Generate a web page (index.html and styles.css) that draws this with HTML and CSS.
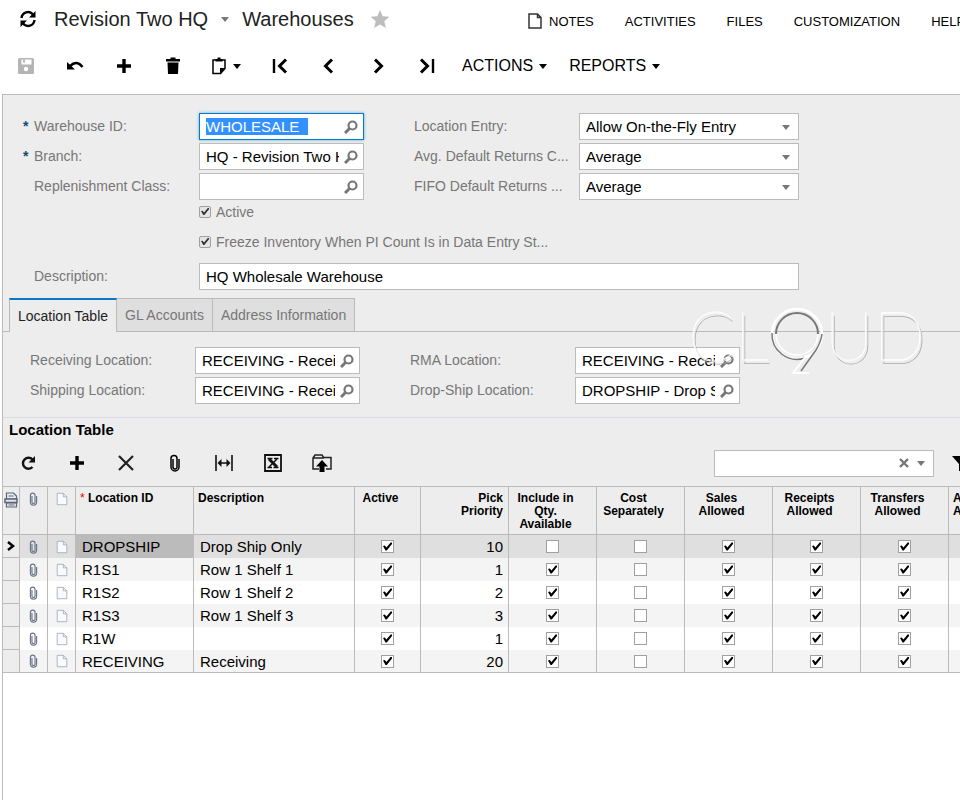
FILE: index.html
```html
<!DOCTYPE html>
<html lang="en">
<head>
    <meta charset="UTF-8">
    <meta name="viewport" content="width=device-width, initial-scale=1.0">
    <title>Warehouses</title>
    <link rel="stylesheet" href="styles.css">
</head>
<body>
    <svg class="defs" aria-hidden="true">
        <symbol id="i-lens" viewBox="0 0 14 14"><circle cx="8.5" cy="5.5" r="4" fill="none" stroke="currentColor" stroke-width="2.2"/><path d="M6 8L1 13" stroke="currentColor" stroke-width="3"/></symbol>
        <symbol id="i-plus" viewBox="0 0 16 16"><path d="M8 1v14M1 8h14" stroke="currentColor" stroke-width="3.4"/></symbol>
        <symbol id="i-clip" viewBox="0 0 12 18"><path d="M4 5v8a2 2 0 0 0 4 0V4.500a3 3 0 0 0-6 0M2 4.500V13a4 4 0 0 0 8 0V5" fill="none" stroke="currentColor" stroke-width="1.500"/></symbol>
        <symbol id="i-page" viewBox="0 0 14 16"><path d="M1.500 1.500h7l4 4v9h-11z" fill="#f8fafd" stroke="currentColor"/><path d="M8.500 1.500v4h4" fill="none" stroke="currentColor"/></symbol>
        <symbol id="i-left" viewBox="0 0 18 18"><path d="M12 2.500L5.500 9L12 15.500" fill="none" stroke="currentColor" stroke-width="3"/></symbol>
    </svg>

    <header class="title-bar">
        <div class="title">
            <button class="icon-btn" aria-label="Refresh">
                <svg width="18" height="18" viewBox="0 0 18 18"><path d="M2.500 8a6.500 6.500 0 0 1 11.500-3.500M15.500 10a6.500 6.500 0 0 1-11.500 3.500" fill="none" stroke="#000" stroke-width="2.400"/><path d="M16.500 1v6.500H10zM1.500 17v-6.500H8z"/></svg>
            </button>
            <h1>Revision Two HQ <span class="caret caret-gray"></span> Warehouses</h1>
            <svg width="20" height="20" viewBox="0 0 20 20"><path d="M10 1l2.700 6.200 6.600.6-5 4.500 1.500 6.600L10 15.500l-5.800 3.400 1.500-6.600-5-4.500 6.600-.6z" fill="#bdbdbd"/></svg>
        </div>
        <nav class="menu">
            <a href="#"><svg width="14" height="16" viewBox="0 0 14 16"><path d="M1 1h8.500L13 4.500V15H1zM9.500 1v3.500H13" fill="none" stroke="#333" stroke-width="1.500"/></svg>NOTES</a>
            <a href="#">ACTIVITIES</a>
            <a href="#">FILES</a>
            <a href="#">CUSTOMIZATION</a>
            <a href="#">HELP</a>
        </nav>
    </header>

    <div class="toolbar main-toolbar">
        <button aria-label="Save" disabled><svg width="16" height="16" viewBox="0 0 16 16"><path d="M0 1.500Q0 0 1.500 0h13Q16 0 16 1.500v13q0 1.500-1.500 1.500h-13Q0 16 0 14.500z" fill="#b5b5b5"/><path d="M3.500 1.500h10v5h-10z" fill="#fff"/><path d="M5 1.500h2v3H5z" fill="#b5b5b5"/><circle cx="8" cy="11" r="2.200" fill="#fff"/></svg></button>
        <button aria-label="Undo"><svg width="18" height="16" viewBox="0 0 18 16"><path d="M4 8Q11 1.500 16.500 9" fill="none" stroke="#000" stroke-width="2.600"/><path d="M1 4v7.500h8z"/></svg></button>
        <button aria-label="Add"><svg width="16" height="16"><use href="#i-plus"/></svg></button>
        <button aria-label="Delete"><svg width="14" height="18" viewBox="0 0 14 18"><path d="M0 2h4.500V.5h5V2H14v2.500H0zM1.500 5.500h11L12 17H2z"/></svg></button>
        <button class="wide" aria-label="Clipboard"><svg width="14" height="18" viewBox="0 0 14 18"><path d="M1 3h12v8.500L8.500 16.500H1z" fill="#fff" stroke="#000" stroke-width="1.500"/><path d="M3.500 4.500V2h2V.5h3V2h2v2.500zM8 16.500V11h5z"/></svg><span class="caret"></span></button>
        <button aria-label="First"><svg width="18" height="18"><path d="M3 2v14" stroke="#000" stroke-width="2.400"/><use href="#i-left" x="3"/></svg></button>
        <button aria-label="Previous"><svg width="18" height="18"><use href="#i-left"/></svg></button>
        <button aria-label="Next"><svg class="flip" width="18" height="18"><use href="#i-left"/></svg></button>
        <button aria-label="Last"><svg class="flip" width="18" height="18"><path d="M3 2v14" stroke="#000" stroke-width="2.400"/><use href="#i-left" x="3"/></svg></button>
        <button class="text-btn">ACTIONS<span class="caret"></span></button>
        <button class="text-btn">REPORTS<span class="caret"></span></button>
    </div>

    <main class="screen">
        <form class="summary">
            <label class="required" for="warehouse">Warehouse ID:</label>
            <div class="lookup focused"><input id="warehouse" type="text" value="WHOLESALE  "><button type="button" aria-label="Find warehouse"><svg width="14" height="14"><use href="#i-lens"/></svg></button></div>
            <label class="second" for="entry">Location Entry:</label>
            <div class="drop"><select id="entry"><option>Allow On-the-Fly Entry</option></select></div>

            <label class="required" for="branch">Branch:</label>
            <div class="lookup"><input id="branch" type="text" value="HQ - Revision Two HQ"><button type="button" aria-label="Find branch"><svg width="14" height="14"><use href="#i-lens"/></svg></button></div>
            <label class="second" for="avg">Avg. Default Returns C...</label>
            <div class="drop"><select id="avg"><option>Average</option></select></div>

            <label for="replenishment">Replenishment Class:</label>
            <div class="lookup"><input id="replenishment" type="text"><button type="button" aria-label="Find class"><svg width="14" height="14"><use href="#i-lens"/></svg></button></div>
            <label class="second" for="fifo">FIFO Default Returns ...</label>
            <div class="drop"><select id="fifo"><option>Average</option></select></div>

            <label class="check"><input type="checkbox" checked>Active</label>
            <label class="check"><input type="checkbox" checked>Freeze Inventory When PI Count Is in Data Entry St...</label>

            <label for="description">Description:</label>
            <input class="description" id="description" type="text" value="HQ Wholesale Warehouse">
        </form>

        <div class="tabs">
            <button class="tab active">Location Table</button>
            <button class="tab">GL Accounts</button>
            <button class="tab">Address Information</button>
        </div>

        <section class="tab-page">
            <form class="locations">
                <label for="receiving">Receiving Location:</label>
                <div class="lookup"><input id="receiving" type="text" value="RECEIVING - Receiving"><button type="button" aria-label="Find location"><svg width="14" height="14"><use href="#i-lens"/></svg></button></div>
                <label class="second" for="rma">RMA Location:</label>
                <div class="lookup"><input id="rma" type="text" value="RECEIVING - Receiving"><button type="button" aria-label="Find location"><svg width="14" height="14"><use href="#i-lens"/></svg></button></div>
                <label for="shipping">Shipping Location:</label>
                <div class="lookup"><input id="shipping" type="text" value="RECEIVING - Receiving"><button type="button" aria-label="Find location"><svg width="14" height="14"><use href="#i-lens"/></svg></button></div>
                <label class="second" for="dropship">Drop-Ship Location:</label>
                <div class="lookup"><input id="dropship" type="text" value="DROPSHIP - Drop Ship Only"><button type="button" aria-label="Find location"><svg width="14" height="14"><use href="#i-lens"/></svg></button></div>
            </form>

            <div class="cloud-logo">
                <span>C</span>
                <span>L</span>
                <svg width="56" height="72" viewBox="0 0 56 72" fill="none">
                    <circle cx="28" cy="28" r="25" stroke="#fff" stroke-width="2.500"/>
                    <path d="M3 27a25 25 0 0 0 33 25" stroke="#777" stroke-width="1.500"/>
                    <circle cx="28" cy="28" r="21" stroke="#fff" stroke-width="1.500"/>
                    <path d="M7 28a21 21 0 0 1 42 0" stroke="#777" stroke-width="2"/>
                    <path d="M38 49L24 67h16" stroke="#fff" stroke-width="2"/>
                    <path d="M53 28q-1 8-6 16L32 65" stroke="#777" stroke-width="1.500"/>
                </svg>
                <span>U</span>
                <span>D</span>
            </div>
        </section>

        <section class="grid-head">
            <h2>Location Table</h2>
            <div class="toolbar grid-toolbar">
                <button aria-label="Refresh"><svg width="16" height="16" viewBox="0 0 16 16"><path d="M12.500 4.500A5.500 5.500 0 1 0 12.500 12" fill="none" stroke="#111" stroke-width="2.400"/><path d="M15 1v6.500H8.500z" fill="#111"/></svg></button>
                <button aria-label="Add row"><svg width="16" height="16"><use href="#i-plus"/></svg></button>
                <button aria-label="Delete row"><svg width="16" height="16" viewBox="0 0 16 16"><path d="M1 1l14 14M15 1L1 15" stroke="#222" stroke-width="2.200"/></svg></button>
                <button aria-label="Attach file"><svg width="12" height="18"><use href="#i-clip"/></svg></button>
                <button aria-label="Fit width"><svg width="18" height="16" viewBox="0 0 18 16"><path d="M1 0v16M17 0v16M4 8h10" stroke="#111" stroke-width="1.600"/><path d="M2.500 8l4-4v8zM15.500 8l-4-4v8z" fill="#111"/></svg></button>
                <button aria-label="Export to Excel"><svg width="18" height="18" viewBox="0 0 18 18"><path d="M1 1h16v16H1z" fill="none" stroke="#111" stroke-width="1.800"/><path d="M5 5l8 8" stroke="#111" stroke-width="3"/><path d="M13 5l-8 8M3.500 4.500h5M9.500 13.500h5M10 4.500h4.500M3.500 13.500H8" stroke="#111" stroke-width="1.500"/></svg></button>
                <button aria-label="Upload"><svg width="20" height="18" viewBox="0 0 20 18"><path d="M7 15H1V4l2-3h7l1.500 2.500H19V15h-5M1.500 4H12" fill="none" stroke="#222" stroke-width="1.500"/><path d="M10 6l6 6.500h-3.500V18h-5v-5.500H4z"/></svg></button>
                <div class="search">
                    <input type="text" aria-label="Search">
                    <svg width="10" height="10" viewBox="0 0 10 10"><path d="M1 1l8 8M9 1L1 9" stroke="#777" stroke-width="2.400"/></svg>
                    <span class="caret caret-gray"></span>
                </div>
                <button class="filter" aria-label="Filter"><svg width="18" height="16" viewBox="0 0 18 16"><path d="M0 1h18l-7 8v7H7V9z"/></svg></button>
            </div>
        </section>

        <div class="grid">
            <table>
                <colgroup>
                    <col class="c-row"><col class="c-icon"><col class="c-icon"><col class="c-id"><col class="c-desc"><col class="c-active">
                    <col class="c-flag"><col class="c-flag"><col class="c-flag"><col class="c-flag"><col class="c-flag"><col class="c-flag"><col class="c-flag">
                </colgroup>
                <thead>
                    <tr>
                        <th class="icon-cell"><svg width="14" height="16" viewBox="0 0 14 16"><path d="M2.500 1h7l3 3v3h-10zM2.500 11h10v4h-10z" fill="#e8ecf2" stroke="#5c6678" stroke-width="1.200"/><path d="M4.500 4h5M4.500 13h6" stroke="#5c6678" stroke-width="1.200"/><path d="M1 7h12v3.500H1z" fill="#dfe4ec" stroke="#5c6678" stroke-width="1.500"/></svg></th>
                        <th class="icon-cell clip"><svg width="11" height="14"><use href="#i-clip"/></svg></th>
                        <th class="icon-cell page"><svg width="14" height="14"><use href="#i-page"/></svg></th>
                        <th><span class="star">*</span> Location ID</th>
                        <th>Description</th>
                        <th class="mid">Active</th>
                        <th class="num">Pick<br>Priority</th>
                        <th class="mid">Include in<br>Qty.<br>Available</th>
                        <th class="mid">Cost<br>Separately</th>
                        <th class="mid">Sales<br>Allowed</th>
                        <th class="mid">Receipts<br>Allowed</th>
                        <th class="mid">Transfers<br>Allowed</th>
                        <th>Assembly<br>Allowed</th>
                    </tr>
                </thead>
                <tbody id="rows"></tbody>
            </table>
        </div>
    </main>

    <script>
        // id, description, pick priority, include in qty
        const locations = [
            ['DROPSHIP', 'Drop Ship Only', 10, false],
            ['R1S1', 'Row 1 Shelf 1', 1, true],
            ['R1S2', 'Row 1 Shelf 2', 2, true],
            ['R1S3', 'Row 1 Shelf 3', 3, true],
            ['R1W', '', 1, true],
            ['RECEIVING', 'Receiving', 20, true]
        ];

        function flag(name, on) {
            return `<td class="flag"><input type="checkbox" aria-label="${name}" ${on ? 'checked' : ''}></td>`;
        }

        document.getElementById('rows').innerHTML = locations.map(([id, desc, pick, include], i) => `
            <tr>
                <td class="row-mark">${i === 0 ? '<svg width="8" height="10" viewBox="0 0 8 10"><path d="M1 1l5 4-5 4" fill="none" stroke="#000" stroke-width="2.500"/></svg>' : ''}</td>
                <td class="icon-cell clip"><svg width="11" height="14"><use href="#i-clip"/></svg></td>
                <td class="icon-cell page"><svg width="14" height="14"><use href="#i-page"/></svg></td>
                <td class="id">${id}</td>
                <td>${desc}</td>
                ${flag('Active', true)}
                <td class="num">${pick}</td>
                ${flag('Include in Qty. Available', include)}
                ${flag('Cost Separately', false)}
                ${flag('Sales Allowed', true)}
                ${flag('Receipts Allowed', true)}
                ${flag('Transfers Allowed', true)}
                <td></td>
            </tr>`).join('');

        document.getElementById('warehouse').select();
    </script>
</body>
</html>
```

FILE: styles.css
```css
* {
    margin: 0;
    padding: 0;
    box-sizing: border-box;
}

body {
    min-height: 100vh;
    display: flex;
    flex-direction: column;
    overflow: hidden;
    background: #fff;
    color: #000;
    font-family: "Liberation Sans", Arial, sans-serif;
    font-size: 15px;
}

button, input, select {
    font: inherit;
    color: inherit;
    border: none;
    background: none;
    outline: none;
}

svg {
    display: block;
    flex: none;
}

.defs {
    position: absolute;
    width: 0;
    height: 0;
}

.flip {
    transform: scaleX(-1);
}

.caret {
    display: inline-block;
    border: 4px solid transparent;
    border-top: 5px solid #000;
    border-bottom: none;
}

.caret-gray {
    border-top-color: #777;
}

/* header */
.title-bar {
    display: flex;
    height: 38px;
    align-items: center;
}

.title {
    display: flex;
    align-items: center;
    flex: none;
    width: 528px;
    padding-left: 19px;
}

.title h1 {
    display: flex;
    align-items: center;
    gap: 13px;
    margin: 0 16px 0 17px;
    font-size: 20px;
    font-weight: normal;
    color: #222;
}

.menu {
    display: flex;
    gap: 31px;
    padding-top: 4px;
    font-size: 13px;
}

.menu a {
    display: flex;
    align-items: center;
    gap: 7px;
    color: #000;
    text-decoration: none;
}

.toolbar {
    display: flex;
    align-items: center;
}

.toolbar button {
    display: flex;
    flex: none;
    align-items: center;
    justify-content: center;
    width: 49px;
    height: 32px;
}

.main-toolbar {
    height: 56px;
    padding-left: 1px;
}

.toolbar .wide {
    gap: 7px;
    width: 58px;
}

.toolbar .text-btn {
    gap: 6px;
    width: auto;
    padding: 0 11px;
    font-size: 16px;
}

/* screen body */
.screen {
    display: flex;
    flex-direction: column;
    flex: 1;
    margin-left: 2px;
    border-left: 1px solid #bbb;
    border-top: 1px solid #bbb;
}

.summary, .locations {
    display: grid;
    grid-template-columns: 165px 165px 215px 220px;
    gap: 3px 0;
    align-items: center;
    background: #ededed;
    color: #777;
    font-size: 14px;
}

.summary label, .locations label {
    padding-bottom: 2px;
}

.summary {
    padding: 18px 0 8px 31px;
}

.second {
    padding-left: 50px;
    white-space: nowrap;
}

.required::before {
    content: "*";
    display: inline-block;
    width: 11px;
    margin-left: -11px;
    color: #124a70;
    font-weight: bold;
}

.lookup, .drop, .description, .search {
    height: 27px;
    border: 1px solid #bbb;
    background: #fff;
    color: #000;
    font-size: 15px;
}

.lookup {
    display: flex;
    align-items: center;
    padding-left: 6px;
}

.lookup input {
    flex: 1;
    min-width: 0;
}

.lookup button {
    padding: 0 5px;
    color: #777;
}

.focused {
    border-color: #0a78c8;
    box-shadow: 0 0 3px #5aaee6;
}

.focused input::selection {
    background: #3390ff;
    color: #fff;
}

.drop {
    position: relative;
}

.drop select {
    width: 100%;
    height: 100%;
    padding-left: 6px;
    appearance: none;
    font-size: 15px;
}

.drop::after {
    content: "";
    position: absolute;
    right: 8px;
    top: 11px;
    border: 4px solid transparent;
    border-top: 5px solid #777;
    border-bottom: none;
}

.description {
    grid-column: 2 / 5;
    padding-left: 6px;
}

.check {
    grid-column: 2 / 5;
    display: flex;
    align-items: center;
    gap: 5px;
    height: 19px;
    margin-bottom: 8px;
}

input[type="checkbox"] {
    position: relative;
    width: 13px;
    height: 13px;
    appearance: none;
    border: 1px solid #a0a0a0;
    background: #fff;
}

.check input[type="checkbox"] {
    width: 12px;
    height: 12px;
    border-radius: 2px;
    background: #e4e4e4;
}

input[type="checkbox"]:checked::after {
    content: "";
    position: absolute;
    inset: 1px;
    background: #000;
    clip-path: polygon(0 45%, 20% 40%, 38% 62%, 85% 5%, 100% 5%, 100% 22%, 42% 95%, 28% 95%);
}

.check input[type="checkbox"]:checked::after {
    background: #333;
}

/* tabs */
.tabs {
    display: flex;
    height: 34px;
    padding-left: 6px;
    background: #ededed;
    box-shadow: inset 0 -1px #bbb;
}

.tab {
    padding: 0 8px;
    border: 1px solid #bbb;
    border-left: none;
    background: #dfdfdf;
    color: #777;
    font-size: 14px;
}

.tab.active {
    border-left: 1px solid #bbb;
    border-top: 2px solid #0a78c8;
    border-bottom: none;
    background: #ededed;
    color: #222;
}

.tab-page {
    position: relative;
    background: #ededed;
    border-bottom: 1px solid #dadae2;
}

.locations {
    grid-template-columns: 165px 165px 215px 165px;
    padding: 15px 0 13px 27px;
}

.cloud-logo {
    position: absolute;
    left: 686px;
    top: -26px;
    display: flex;
    align-items: flex-start;
    pointer-events: none;
}

.cloud-logo span {
    color: #ededed;
    font-family: Lato, sans-serif;
    font-size: 68px;
    font-weight: 100;
    line-height: 60px;
    text-shadow: -1px -1px #fff, -1px -2px #fff, 1px 2px #aaa;
}

/* location grid */
.grid-head {
    background: #ededed;
}

.grid-head h2 {
    padding: 2px 0 0 6px;
    font-size: 15px;
    line-height: 20px;
}

.grid-toolbar {
    height: 46px;
    overflow: hidden;
}

.search {
    display: flex;
    flex: none;
    align-items: center;
    gap: 8px;
    width: 220px;
    margin-left: auto;
    padding: 0 8px 0 6px;
}

.search input {
    flex: 1;
    min-width: 0;
}

.toolbar .filter {
    width: 26px;
    padding-left: 18px;
    justify-content: flex-start;
}

.grid {
    overflow: hidden;
    border-top: 1px solid #bbb;
}

.grid table {
    width: 1034px;
    table-layout: fixed;
    border-spacing: 0;
}

.c-row { width: 17px; }
.c-icon { width: 28px; }
.c-id { width: 118px; }
.c-desc { width: 161px; }
.c-active { width: 66px; }
.c-flag { width: 88px; }

th {
    height: 48px;
    padding: 5px 4px 0;
    vertical-align: top;
    text-align: left;
    font-size: 12px;
    line-height: 13px;
    background: #ededed;
    border-right: 1px solid #bbb;
    border-bottom: 1px solid #bbb;
}

th.mid {
    padding-right: 18px;
    text-align: center;
}

.star {
    color: #e00;
    font-weight: normal;
}

td {
    height: 23px;
    padding: 0 6px;
    border-right: 1px solid #bbb;
    white-space: nowrap;
}

.num {
    padding-right: 5px;
    text-align: right;
}

.icon-cell {
    padding-left: 0;
    padding-right: 0;
}

.icon-cell svg {
    margin: 0 auto;
}

.clip {
    color: #6b7688;
}

.page {
    color: #a3adbd;
}

.flag {
    text-align: center;
}

.flag input {
    display: block;
    margin: 0 auto;
}

tbody tr:nth-child(even) {
    background: #f4f4f4;
}

tbody tr:first-child {
    background: #dfdfdf;
}

tbody tr:first-child .id {
    background: #bbb;
}

.row-mark {
    padding: 0 4px;
    background: #ededed;
    border-bottom: 1px solid #bbb;
}

tbody tr:last-child td {
    border-bottom: 1px solid #bbb;
}
```
